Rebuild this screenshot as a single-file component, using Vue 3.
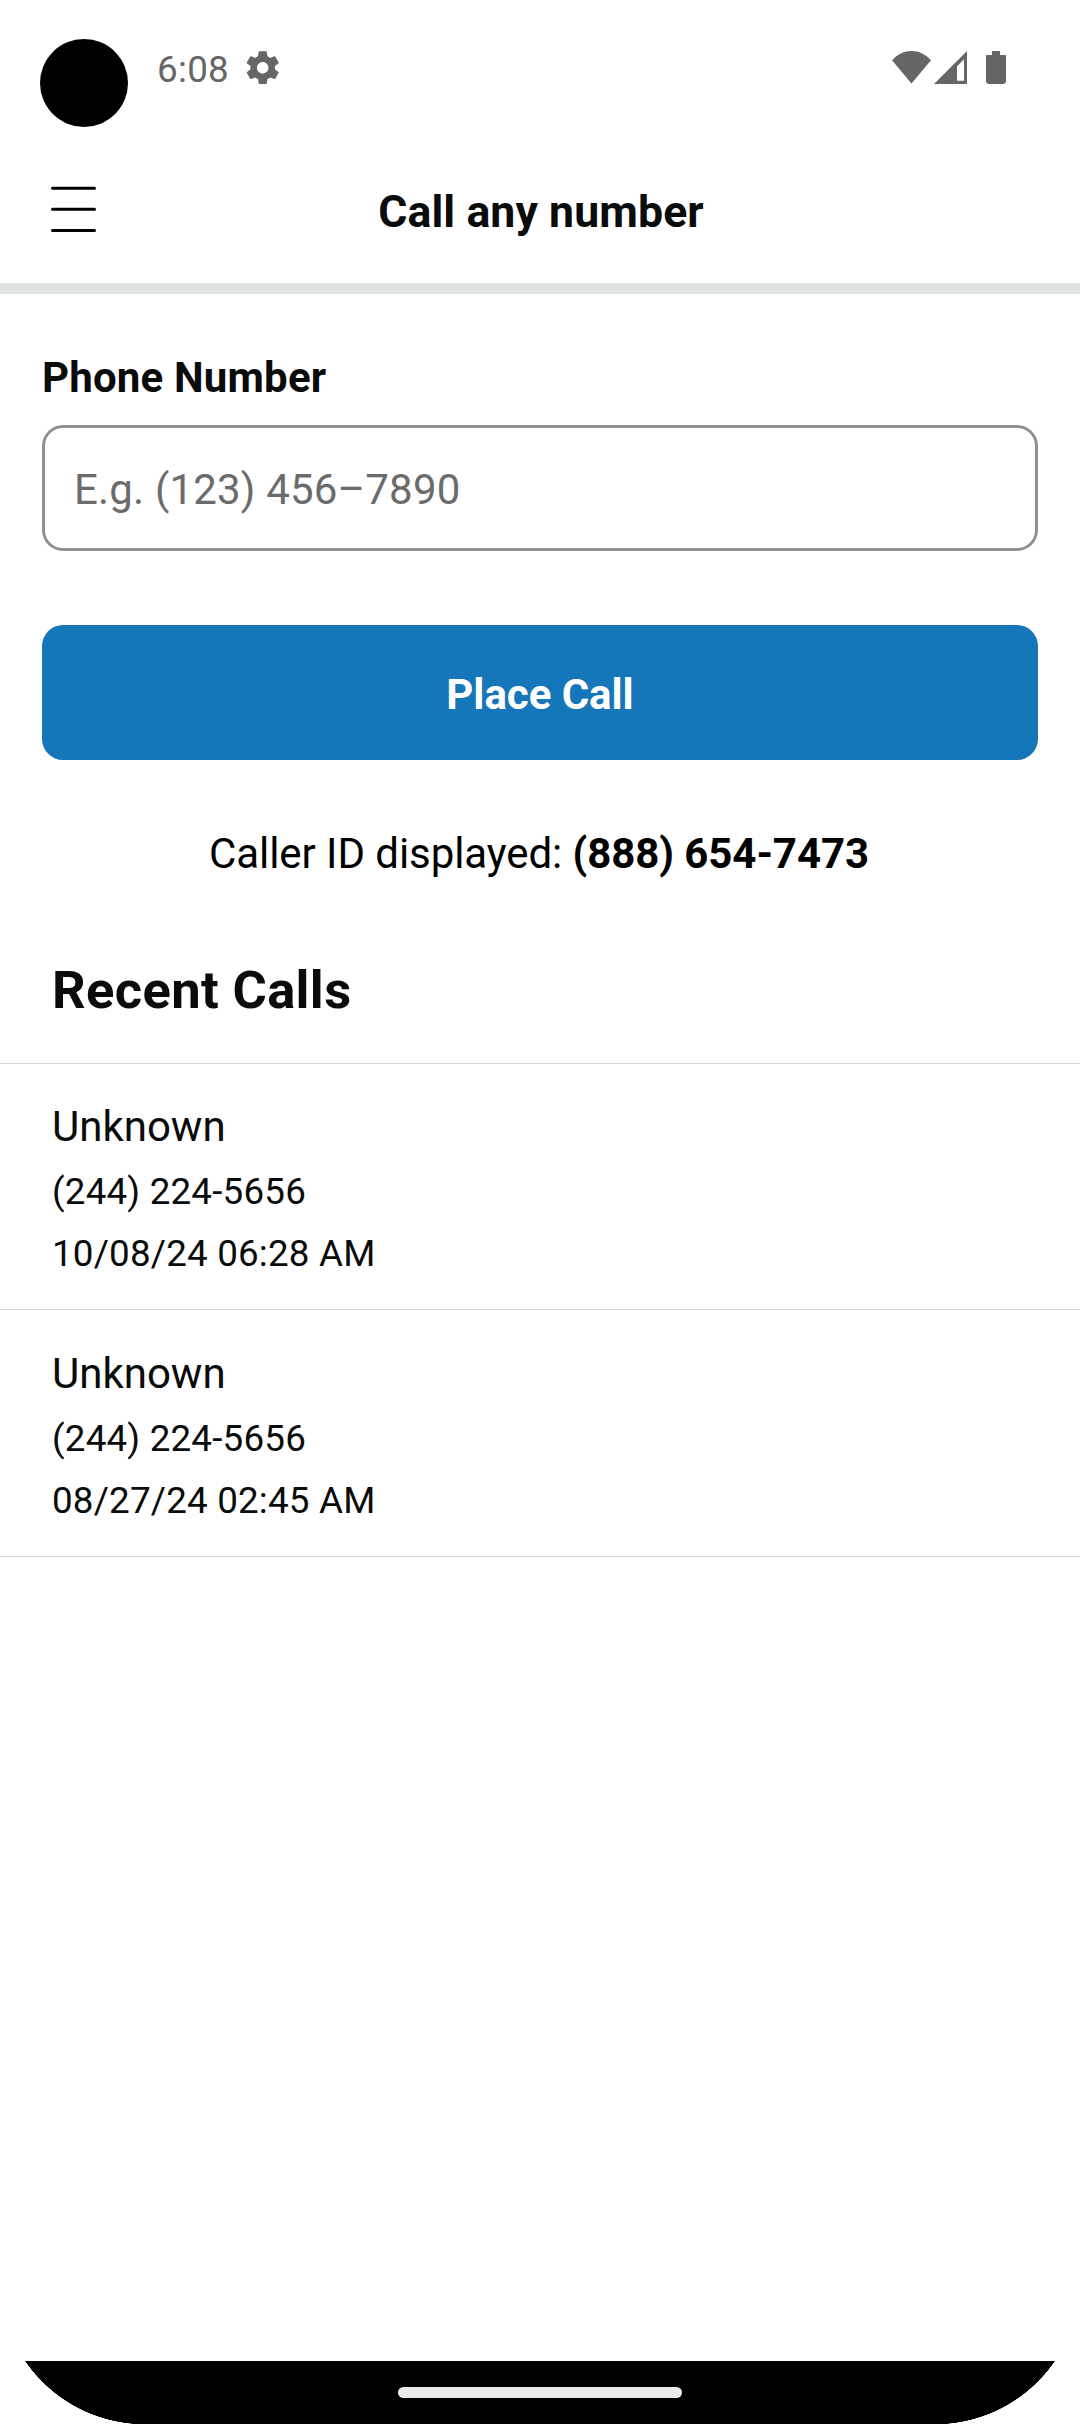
<script setup>
const callerId = '(888) 654-7473'
const calls = [
  { name: 'Unknown', number: '(244) 224-5656', time: '10/08/24 06:28 AM' },
  { name: 'Unknown', number: '(244) 224-5656', time: '08/27/24 02:45 AM' },
]
</script>

<template>
  <div class="screen">
    <div class="status">
      <div class="camera"></div>
      <span class="clock">6:08</span>
      <svg class="gear" viewBox="0 0 24 24">
        <path d="M19.43 12.98c.04-.32.07-.64.07-.98s-.03-.66-.07-.98l2.11-1.65c.19-.15.24-.42.12-.64l-2-3.46c-.12-.22-.39-.3-.61-.22l-2.49 1c-.52-.4-1.08-.73-1.69-.98l-.38-2.65C14.46 2.18 14.25 2 14 2h-4c-.25 0-.46.18-.49.42l-.38 2.65c-.61.25-1.17.59-1.69.98l-2.49-1c-.23-.09-.49 0-.61.22l-2 3.46c-.13.22-.07.49.12.64l2.11 1.65c-.04.32-.07.65-.07.98s.03.66.07.98l-2.11 1.65c-.19.15-.24.42-.12.64l2 3.46c.12.22.39.3.61.22l2.49-1c.52.4 1.08.73 1.69.98l.38 2.65c.03.24.24.42.49.42h4c.25 0 .46-.18.49-.42l.38-2.65c.61-.25 1.17-.59 1.69-.98l2.49 1c.23.09.49 0 .61-.22l2-3.46c.12-.22.07-.49-.12-.64l-2.11-1.65zM12 15.5c-1.93 0-3.5-1.57-3.5-3.5s1.57-3.5 3.5-3.5 3.5 1.57 3.5 3.5-1.57 3.5-3.5 3.5z" />
      </svg>
      <svg class="signals" viewBox="0 0 120 40">
        <path d="M2 12.3C7.5 6.3 14 3 21.5 3S35.5 6.3 41 12.3L21.5 35.5z" />
        <path fill-rule="evenodd" d="M44 36L77 3v33zM67 18.2v14.6h7V11.2z" />
        <path d="M102 3h8v4h5q1 0 1 1v26q0 1-1.5 1v1h-17v-1q-1.500 0-1.500-1V8q0-1 1-1h5z" />
      </svg>
    </div>

    <header class="header">
      <svg class="menu" viewBox="0 0 45 46">
        <path d="M1.500 2.300h42M1.500 23.300h42M1.500 44.500h42" />
      </svg>
      <h1 class="title">Call any number</h1>
    </header>

    <main>
      <section class="dialer">
        <label class="label" for="phone">Phone Number</label>
        <input id="phone" class="field" type="tel" placeholder="E.g. (123) 456–7890" />
        <button class="place" type="button">Place Call</button>
        <p class="caller">Caller ID displayed: <b>{{ callerId }}</b></p>
      </section>

      <section class="recent">
        <h2 class="heading">Recent Calls</h2>
        <ul class="list">
          <li v-for="call in calls" :key="call.time" class="call">
            <span class="name">{{ call.name }}</span>
            <span class="detail">{{ call.number }}</span>
            <span class="detail">{{ call.time }}</span>
          </li>
        </ul>
      </section>
    </main>

    <footer class="nav">
      <div class="handle"></div>
    </footer>
  </div>
</template>

<style>
body {
  background: #fff;
}
</style>

<style scoped>
.screen {
  box-sizing: border-box;
  width: 1080px;
  height: 2424px;
  display: flex;
  flex-direction: column;
  overflow: hidden;
  background: #fff;
  color: #0a0b0b;
  font-family: Roboto, sans-serif;
}

.status {
  height: 136px;
  flex: none;
  box-sizing: border-box;
  display: flex;
  align-items: flex-start;
  padding: 39px 70px 0 40px;
  color: #666;
}

.camera {
  width: 88px;
  height: 88px;
  border-radius: 50%;
  background: #000;
}

.clock {
  margin: 9px 0 0 29px;
  width: 71px;
  white-space: nowrap;
  font-size: 36.75px;
  line-height: 44px;
  letter-spacing: 0.3px;
}

.gear {
  width: 39.4px;
  height: 39.4px;
  margin: 9.2px 0 0 15.3px;
  fill: #666;
}

.signals {
  width: 120px;
  height: 40px;
  margin: 9px 0 0 auto;
  fill: #666;
}

.header {
  height: 147px;
  flex: none;
  display: grid;
  grid-template-columns: 96px 1fr 94px;
  align-items: start;
  border-bottom: 11px solid #dfe3e3;
}

.menu {
  width: 45px;
  height: 46px;
  margin: 50px 0 0 51px;
  fill: none;
  stroke: #000;
  stroke-width: 3;
  stroke-linecap: round;
}

.title {
  margin: 46px 0 0;
  font-size: 44.6px;
  line-height: 60px;
  font-weight: 700;
  letter-spacing: 0.08px;
  text-align: center;
}

.dialer {
  display: flex;
  flex-direction: column;
  padding: 59px 42px 0;
}

.label {
  font-size: 42px;
  line-height: 50px;
  font-weight: 700;
  letter-spacing: 0.18px;
}

.field {
  box-sizing: border-box;
  width: 100%;
  height: 126px;
  margin: 22px 0 0;
  padding: 2px 29px 0;
  border: 3px solid #919191;
  border-radius: 21px;
  background: #fff;
  font: 42px/50px Roboto, sans-serif;
  letter-spacing: 0.18px;
}

.field::placeholder {
  color: #6b6b6b;
  opacity: 1;
}

.place {
  height: 135px;
  margin: 74px 0 0;
  padding: 4px 0 0;
  border: 0;
  border-radius: 21px;
  background: #1676ba;
  color: #fff;
  font: 700 42px/50px Roboto, sans-serif;
  letter-spacing: -0.06px;
}

.caller {
  margin: 69px 2px 0 0;
  font-size: 42px;
  line-height: 50px;
  letter-spacing: -0.07px;
  text-align: center;
  color: #000;
}

.heading {
  margin: 0;
  padding: 79px 52px 41px;
  font-size: 52.5px;
  line-height: 64px;
  font-weight: 700;
  letter-spacing: 0.36px;
  border-bottom: 1px solid #d5d7d7;
}

.list {
  margin: 0;
  padding: 0;
  list-style: none;
}

.call {
  height: 207px;
  display: flex;
  flex-direction: column;
  padding: 38px 52px 0;
  border-bottom: 1px solid #d5d7d7;
}

.call:last-child {
  padding-top: 39px;
}

.name {
  font-size: 42px;
  line-height: 50px;
}

.detail {
  margin-top: 12px;
  font-size: 36.75px;
  line-height: 50px;
  letter-spacing: 0.2px;
}

.name + .detail {
  margin-top: 15px;
}

.nav {
  flex: none;
  height: 63px;
  margin-top: auto;
  display: flex;
  justify-content: center;
  background: radial-gradient(circle 145px at 145px -82px, #000 145px, transparent 145.5px) 0 0 / 145px 63px no-repeat,
    radial-gradient(circle 145px at 0 -82px, #000 145px, transparent 145.5px) 100% 0 / 145px 63px no-repeat,
    linear-gradient(#000, #000) 50% 0 / 790px 63px no-repeat;
}

.handle {
  width: 284px;
  height: 11px;
  margin-top: 26px;
  border-radius: 6px;
  background: #ebebeb;
}
</style>
